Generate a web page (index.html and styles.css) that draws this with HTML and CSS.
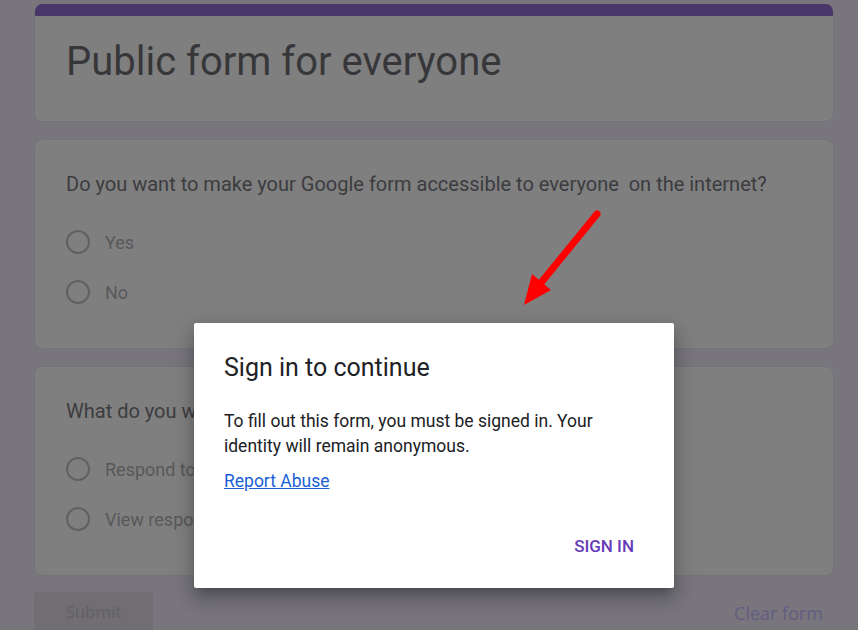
FILE: index.html
```html
<!DOCTYPE html>
<html lang="en">
<head>
<meta charset="utf-8">
<title>Public form for everyone</title>
<link rel="stylesheet" href="styles.css">
</head>
<body>
<main class="form">
  <section class="card title-card">
    <div class="band"></div>
    <h1 class="title">Public form for everyone</h1>
  </section>
  <section class="card question">
    <p class="q-text">Do you want to make your Google form accessible to everyone &nbsp;on the internet?</p>
    <ul class="options">
      <li class="option"><span class="radio"></span><span class="label">Yes</span></li>
      <li class="option"><span class="radio"></span><span class="label">No</span></li>
    </ul>
  </section>
  <section class="card question">
    <p class="q-text">What do you want to do with this form?</p>
    <ul class="options">
      <li class="option"><span class="radio"></span><span class="label">Respond to it</span></li>
      <li class="option"><span class="radio"></span><span class="label">View responses</span></li>
    </ul>
  </section>
  <div class="actions">
    <button class="submit">Submit</button>
    <span class="clear">Clear form</span>
  </div>
</main>

<svg class="arrow" width="858" height="630" viewBox="0 0 858 630" aria-hidden="true">
  <line x1="597" y1="214" x2="540" y2="284" stroke="#ff0000" stroke-width="7" stroke-linecap="round"/>
  <polygon points="524,305 532,274 551,290" fill="#ff0000"/>
</svg>

<div class="dialog" role="dialog">
  <h2 class="d-title">Sign in to continue</h2>
  <p class="d-body">To fill out this form, you must be signed in. Your identity will remain anonymous.</p>
  <a class="d-link" href="#">Report Abuse</a>
  <div class="d-actions"><span class="d-btn">SIGN IN</span></div>
</div>
</body>
</html>
```

FILE: styles.css
```css
html, body {
  margin: 0;
  padding: 0;
  height: 100%;
  overflow: hidden;
}
body {
  background: #78757d;
  font-family: Roboto, "Liberation Sans", sans-serif;
}
.form {
  width: 800px;
  margin-left: 34px;
  padding-top: 4px;
  display: flex;
  flex-direction: column;
  gap: 17px;
}
.card {
  box-sizing: border-box;
  background: #7f7f80;
  border: 1px solid #747377;
  border-radius: 8px;
  overflow: hidden;
}
.title-card {
  height: 118px;
  border-top: none;
}
.band {
  height: 12px;
  background: #4a3668;
}
.title {
  margin: 0;
  padding: 22px 0 0 31px;
  font-weight: 400;
  font-size: 40px;
  line-height: 48px;
  color: #37373a;
}
.question {
  height: 210px;
  padding: 30px 0 0 31px;
}
.q-text {
  margin: 0;
  font-size: 20px;
  line-height: 28px;
  color: #3c3c3f;
}
.options {
  list-style: none;
  margin: 32px 0 0;
  padding: 0;
  display: flex;
  flex-direction: column;
  gap: 26px;
}
.option {
  display: flex;
  align-items: center;
  height: 24px;
}
.radio {
  box-sizing: border-box;
  width: 24px;
  height: 24px;
  border: 2px solid #616163;
  border-radius: 50%;
  margin-right: 15px;
}
.label {
  font-size: 18px;
  color: #58585a;
}
.actions {
  display: flex;
  justify-content: space-between;
  align-items: flex-start;
  margin-top: -1px;
}
.submit {
  width: 119px;
  height: 44px;
  border: none;
  border-radius: 4px;
  background: #706e73;
  color: #625f66;
  font-family: "Open Sans", Roboto, sans-serif;
  font-size: 17px;
  font-weight: 500;
  padding: 0 0 6px;
  text-align: center;
}
.clear {
  margin-top: 9px;
  margin-right: 11px;
  font-family: "Open Sans", Roboto, sans-serif;
  font-size: 18px;
  font-weight: 500;
  color: #645c80;
}
.arrow {
  position: absolute;
  left: 0;
  top: 0;
}
.dialog {
  position: absolute;
  left: 194px;
  top: 323px;
  width: 480px;
  height: 265px;
  box-sizing: border-box;
  background: #fff;
  border-radius: 2px;
  padding: 29px 30px 0;
  box-shadow: 0 12px 17px 2px rgba(0,0,0,0.14), 0 5px 22px 4px rgba(0,0,0,0.12), 0 7px 8px -4px rgba(0,0,0,0.2);
  display: flex;
  flex-direction: column;
}
.d-title {
  margin: 0;
  font-size: 25px;
  font-weight: 400;
  line-height: 32px;
  color: #202124;
}
.d-body {
  margin: 25px 0 0;
  font-size: 17.5px;
  line-height: 25px;
  color: #202124;
}
.d-link {
  margin-top: 10px;
  align-self: flex-start;
  font-size: 17.5px;
  line-height: 25px;
  color: #1a5fd6;
  text-decoration: underline;
}
.d-actions {
  display: flex;
  justify-content: flex-end;
  margin-top: 42px;
}
.d-btn {
  font-size: 17px;
  font-weight: 500;
  color: #673ab7;
  margin-right: 10px;
}
```
